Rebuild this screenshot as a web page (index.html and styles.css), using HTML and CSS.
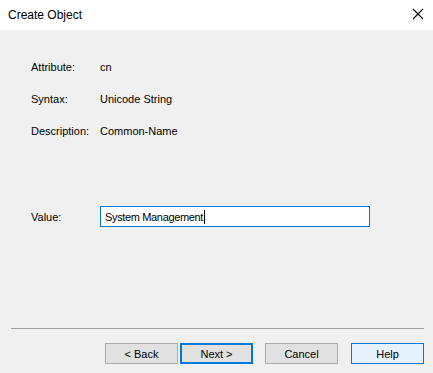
FILE: index.html
```html
<!DOCTYPE html>
<html>
<head>
<meta charset="utf-8">
<link rel="stylesheet" href="styles.css">
</head>
<body>
<div class="dialog">
  <div class="titlebar">
    <span class="title">Create Object</span>
    <svg class="close" width="12" height="12" viewBox="0 0 12 12"><path d="M1 1L11 11M11 1L1 11" stroke="#000" stroke-width="1.1" fill="none"/></svg>
  </div>
  <div class="content">
    <div class="info">
      <span class="label">Attribute:</span><span class="val">cn</span>
      <span class="label">Syntax:</span><span class="val">Unicode String</span>
      <span class="label">Description:</span><span class="val">Common-Name</span>
    </div>
    <div class="value-row">
      <span class="label">Value:</span>
      <div class="input"><span>System Management</span><span class="caret"></span></div>
    </div>
  </div>
  <div class="footer">
    <div class="sep"></div>
    <div class="buttons">
      <div class="btn">&lt; Back</div>
      <div class="btn default">Next &gt;</div>
      <div class="btn gap">Cancel</div>
      <div class="btn help gap">Help</div>
    </div>
  </div>
</div>
</body>
</html>
```
FILE: styles.css
```css
html, body { margin: 0; padding: 0; }
body { width: 433px; height: 373px; background: #f0f0f0; font-family: "Liberation Sans", Arial, sans-serif; font-size: 11px; color: #000; overflow: hidden; }
.dialog { display: flex; flex-direction: column; height: 373px; }
.titlebar { height: 30px; background: #fff; display: flex; align-items: center; justify-content: space-between; padding: 0 8px 0 8px; box-sizing: border-box; }
.title { font-size: 12px; padding-top: 0px; }
.close { margin-right: 1px; margin-top: -2px; }
.content { flex: 1; padding: 31px 0 0 31px; }
.info { display: grid; grid-template-columns: 69px auto; row-gap: 19px; line-height: 13px; }
.value-row { display: flex; align-items: center; margin-top: 68px; }
.value-row .label { width: 69px; }
.input { width: 270px; height: 21px; box-sizing: border-box; border: 1px solid #0078d7; background: #fff; display: flex; align-items: center; padding-left: 4px; font-size: 11px; letter-spacing: -0.35px; }
.caret { display: inline-block; width: 1px; height: 14px; background: #000; margin-left: 1px; }
.footer { padding: 0 9px 9px 11px; }
.sep { height: 1px; background: #a0a0a0; margin-bottom: 14px; }
.buttons { display: flex; justify-content: flex-end; gap: 2px; }
.btn { width: 73px; height: 21px; box-sizing: border-box; border: 1px solid #adadad; background: #e1e1e1; display: flex; align-items: center; justify-content: center; }
.btn.default { border: 2px solid #0078d7; }
.btn.gap { margin-left: 10px; }
.btn.help { margin-left: 11px; background: #e5f1fb; border-color: #0078d7; }
```
